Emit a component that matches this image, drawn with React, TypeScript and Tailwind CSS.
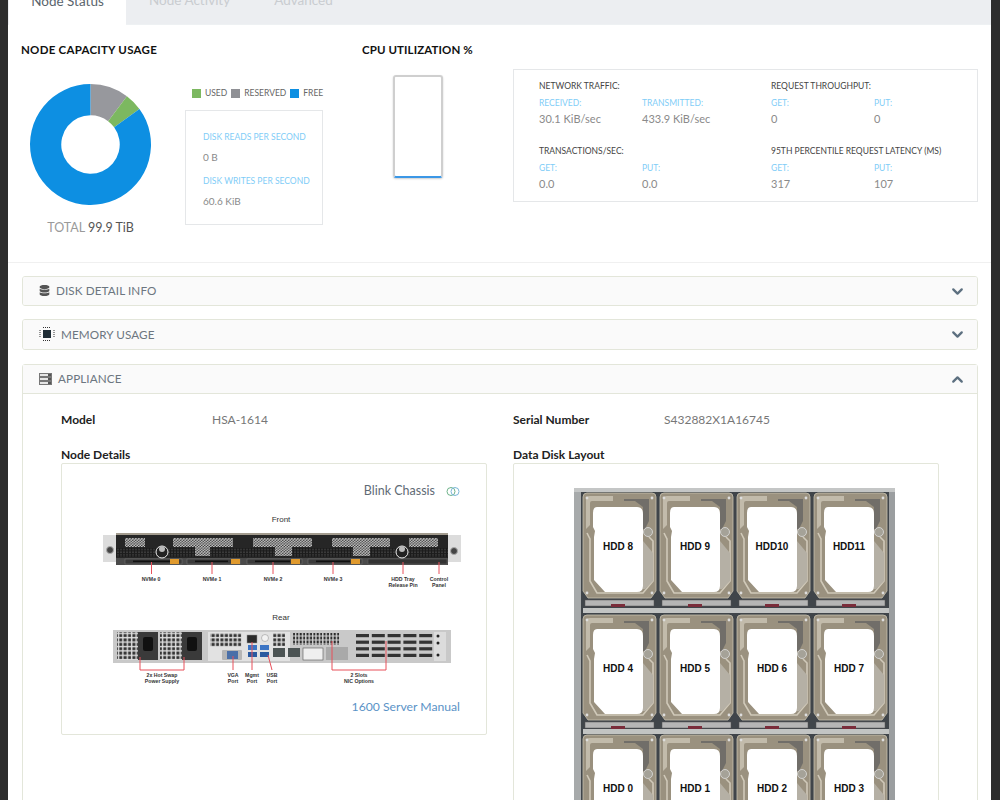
import React from "react";
import { ChevronDown, ChevronUp } from "lucide-react";
import { FaDatabase } from "react-icons/fa";

const FONT = "font-['Lato','Open_Sans',sans-serif]";

function Stat({ label, value }: { label: string; value: string }) {
  return (
    <div>
      <div className="text-[8.5px] leading-[12px] text-[#7fcdf7]">{label}</div>
      <div className="mt-[2px] text-[11px] leading-[16px] text-[#8a8a8a]">{value}</div>
    </div>
  );
}

function DiskStat({ label, value }: { label: string; value: string }) {
  return (
    <div>
      <div className="text-[8.5px] leading-[12px] text-[#7fcdf7]">{label}</div>
      <div className="mt-[6px] text-[10px] leading-[16px] text-[#8a8a8a]">{value}</div>
    </div>
  );
}

function Donut() {
  const arc = (a0: number, a1: number) => {
    const p = (a: number, r: number) => {
      const t = (a * Math.PI) / 180;
      return `${60 + r * Math.sin(t)} ${60 - r * Math.cos(t)}`;
    };
    const large = a1 - a0 > 180 ? 1 : 0;
    return `M${p(a0, 60)} A60 60 0 ${large} 1 ${p(a1, 60)} L${p(a1, 29)} A29 29 0 ${large} 0 ${p(a0, 29)} Z`;
  };
  return (
    <svg width="121" height="121" viewBox="0 0 120 120">
      <path d={arc(0, 37)} fill="#97989d" />
      <path d={arc(37, 54)} fill="#7cb860" />
      <path d={arc(54, 359.99)} fill="#0d8fe2" />
    </svg>
  );
}

function Legend({ color, label }: { color: string; label: string }) {
  return (
    <div className="flex items-center gap-[4px]">
      <span className={`w-[9px] h-[9px] ${color}`} />
      <span className="text-[8.5px] leading-[10px] text-[#666]">{label}</span>
    </div>
  );
}

function ChipIcon() {
  return (
    <svg width="16" height="16" viewBox="0 0 16 16">
      <rect x="4" y="4" width="8" height="8" fill="#1f2d36" />
      <g stroke="#333" strokeWidth="1" strokeDasharray="1 1">
        <path d="M4 1.5h8M4 14.5h8M1 4v8M15 4v8" />
      </g>
    </svg>
  );
}

function ServerIcon() {
  return (
    <svg width="13" height="12" viewBox="0 0 13 12">
      {[0, 4, 8].map((y) => (
        <g key={y}>
          <rect x="0.5" y={y + 0.5} width="12" height="3" fill="#e6e6e6" stroke="#777" />
          <rect x="9" y={y + 1} width="3" height="2" fill="#555" />
        </g>
      ))}
    </svg>
  );
}

function Accordion({ icon, title, open }: { icon: React.ReactNode; title: string; open?: boolean }) {
  return (
    <div className={`flex items-center justify-between bg-[#fafafa] border-[#e3e6da] ${open ? "h-[29px] border-b" : "h-full"} pl-[16px] pr-[11px]`}>
      <div className="flex items-center gap-[6px]">
        {icon}
        <span className="text-[11.7px] text-[#6c7680] tracking-[0.1px]">{title}</span>
      </div>
      {open ? (
        <ChevronUp size={17} strokeWidth={3.2} className="text-[#5d7080]" />
      ) : (
        <ChevronDown size={17} strokeWidth={3.2} className="text-[#5d7080]" />
      )}
    </div>
  );
}

function Label({ x, y, children }: { x: number; y: number; children: string }) {
  return (
    <text x={x} y={y} textAnchor="middle" fontSize="5.2" fontWeight="700" fontFamily="Liberation Sans, sans-serif" fill="#333">
      {children}
    </text>
  );
}

function ServerDiagram() {
  const vents = [
    [125, 538, 20, 9],
    [173, 538, 60, 9],
    [195, 547, 15, 9],
    [253, 538, 59, 9],
    [275, 547, 17, 9],
    [332, 538, 58, 9],
    [353, 547, 17, 9],
    [409, 538, 29, 9],
  ];
  const trays = [
    [125, 57, 170],
    [187, 53, 231],
    [247, 55, 291],
    [308, 54, 351],
  ];
  const leaders = [151.5, 212, 273, 333, 403, 439];
  return (
    <svg width="380" height="186" viewBox="90 512 380 186" className="block" fontFamily="Liberation Sans, sans-serif">
      <defs>
        <pattern id="hex" width="3" height="2.6" patternUnits="userSpaceOnUse">
          <rect width="3" height="2.6" fill="#3a3a3a" />
          <circle cx="0.8" cy="0.7" r="0.9" fill="#c4c4c4" />
          <circle cx="2.3" cy="2" r="0.9" fill="#c4c4c4" />
        </pattern>
        <pattern id="dark" width="3" height="2.6" patternUnits="userSpaceOnUse">
          <rect width="3" height="2.6" fill="#1c1c1c" />
          <circle cx="1" cy="1" r="0.7" fill="#555" />
        </pattern>
        <pattern id="holes" width="4.4" height="4.4" patternUnits="userSpaceOnUse">
          <rect width="4.4" height="4.4" fill="#dedede" />
          <rect x="0.4" y="0.4" width="3" height="3" fill="#333" />
        </pattern>
        <pattern id="pci" width="3.4" height="4" patternUnits="userSpaceOnUse">
          <rect width="3.4" height="4" fill="#d4d4d4" />
          <rect x="0.5" y="0.5" width="2" height="3" fill="#2a2a2a" />
        </pattern>
      </defs>

      <text x="281" y="522" textAnchor="middle" fontSize="8" fill="#333">Front</text>
      <rect x="103" y="535" width="14" height="27" fill="#dcdcdc" />
      <rect x="447" y="535" width="14" height="27" fill="#dcdcdc" />
      <circle cx="110" cy="550" r="3.5" fill="#444" stroke="#aaa" />
      <circle cx="454" cy="551" r="3.5" fill="#444" stroke="#aaa" />
      <rect x="116" y="533" width="332" height="32" fill="#262626" />
      <rect x="116" y="533" width="332" height="2" fill="#a39c8f" />
      <rect x="116" y="548" width="332" height="9" fill="url(#dark)" />
      {vents.map(([x, y, w, h], i) => (
        <rect key={i} x={x} y={y} width={w} height={h} fill="url(#hex)" />
      ))}
      <rect x="116" y="558" width="332" height="7" fill="#4a4a4a" />
      {trays.map(([x, w, o]) => (
        <g key={x}>
          <rect x={x} y="559" width={w} height="5" fill="#3a3a3a" stroke="#777" strokeWidth="0.5" />
          <rect x={x + 8} y="560.5" width={w - 20} height="1.6" fill="#111" />
          <rect x={o} y="559" width="9" height="5" fill="#e09a2e" />
        </g>
      ))}
      <rect x="368" y="559" width="79" height="5" fill="#333" stroke="#666" strokeWidth="0.5" />
      <circle cx="162" cy="552" r="6" fill="#222" stroke="#eee" strokeWidth="1" />
      <circle cx="162" cy="549" r="3" fill="#bbb" />
      <circle cx="402" cy="552" r="6" fill="#222" stroke="#eee" strokeWidth="1" />
      <circle cx="402" cy="549" r="3" fill="#bbb" />
      {leaders.map((x) => (
        <line key={x} x1={x} x2={x} y1="562" y2="574" stroke="#e8505b" strokeWidth="1" />
      ))}
      <Label x={151} y={581}>NVMe 0</Label>
      <Label x={212} y={581}>NVMe 1</Label>
      <Label x={273} y={581}>NVMe 2</Label>
      <Label x={333} y={581}>NVMe 3</Label>
      <Label x={403} y={581}>HDD Tray</Label>
      <Label x={403} y={587}>Release Pin</Label>
      <Label x={439} y={581}>Control</Label>
      <Label x={439} y={587}>Panel</Label>

      <text x="281" y="620" textAnchor="middle" fontSize="8" fill="#333">Rear</text>
      <rect x="113" y="630" width="338" height="33" fill="#c9c9c9" />
      <rect x="117" y="632" width="41" height="28" fill="url(#holes)" />
      <rect x="160" y="632" width="42" height="28" fill="url(#holes)" />
      <rect x="138" y="632" width="20" height="28" fill="#3a3a3a" />
      <rect x="182" y="632" width="20" height="28" fill="#3a3a3a" />
      <rect x="143" y="637" width="10" height="14" rx="2" fill="#111" />
      <rect x="187" y="637" width="10" height="14" rx="2" fill="#111" />
      <rect x="208" y="632" width="82" height="29" fill="#e2e2e2" />
      <rect x="210" y="633" width="32" height="14" fill="url(#holes)" />
      <rect x="222" y="650" width="20" height="10" rx="1" fill="#b5b5b5" />
      <rect x="227" y="651" width="11" height="8" fill="#4a6fa8" />
      <rect x="247" y="635" width="10" height="8" fill="#2b2b2b" stroke="#999" strokeWidth="0.5" />
      <rect x="248" y="645" width="9" height="5" fill="#3b74c4" />
      <rect x="248" y="652" width="9" height="5" fill="#2a5aa0" />
      <rect x="260" y="645" width="9" height="5" fill="#3b74c4" />
      <rect x="260" y="652" width="9" height="5" fill="#2a5aa0" />
      <circle cx="265" cy="638" r="3.5" fill="#f2f2f2" stroke="#888" strokeWidth="0.5" />
      <rect x="273" y="633" width="12" height="13" fill="url(#holes)" />
      <rect x="273" y="648" width="12" height="9" fill="#4b5353" />
      <rect x="288" y="648" width="12" height="9" fill="#4b5353" />
      <rect x="293" y="633" width="47" height="12" fill="url(#pci)" />
      <rect x="303" y="648" width="20" height="12" fill="#efefef" stroke="#555" strokeWidth="0.6" />
      <rect x="326" y="647" width="22" height="13" fill="#a9a9a9" />
      {[0, 1, 2, 3].map((r) =>
        [0, 1, 2, 3, 4].map((c) => (
          <rect key={`${r}-${c}`} x={356 + c * 15.8} y={634 + r * 6.6} width="13" height="3.2" fill="#333" />
        )),
      )}
      <rect x="434" y="632" width="12" height="29" fill="#dcdcdc" />
      <circle cx="438" cy="636" r="1.5" fill="#222" />
      <circle cx="438" cy="643" r="1.5" fill="#222" />
      <circle cx="438" cy="655" r="1.5" fill="#222" />
      <g stroke="#e8505b" strokeWidth="1" fill="none">
        <path d="M140 657V670H184V657" />
        <path d="M332 641V670H386V641" />
        <path d="M233 656V670" />
        <path d="M252 642V670" />
        <path d="M268 655L272 670" />
      </g>
      <Label x={162} y={677}>2x Hot Swap</Label>
      <Label x={162} y={682.5}>Power Supply</Label>
      <Label x={233} y={677}>VGA</Label>
      <Label x={233} y={682.5}>Port</Label>
      <Label x={252} y={677}>Mgmt</Label>
      <Label x={252} y={682.5}>Port</Label>
      <Label x={272} y={677}>USB</Label>
      <Label x={272} y={682.5}>Port</Label>
      <Label x={359} y={677}>2 Slots</Label>
      <Label x={359} y={682.5}>NIC Options</Label>
    </svg>
  );
}

function Hdd({ x, y, label }: { x: number; y: number; label: string }) {
  return (
    <g transform={`translate(${x} ${y})`}>
      <path d="M4 0H69Q73 0 73 4V98L68 105H5L0 98V4Q0 0 4 0Z" fill="#9a917f" stroke="#c8c1b0" strokeWidth="0.8" />
      <path d="M3 7Q3 3 7 3H30V8H9Q7 8 7 10V32L3 36Z" fill="#c2bbab" />
      <path d="M41 6H66V28L62 36H60V14L52 8H41Z" fill="#5f5f5f" opacity="0.7" />
      <circle cx="65" cy="39" r="4.5" fill="#a5a298" stroke="#ddd" strokeWidth="0.8" />
      <path d="M4 40L7 46V88L14 100H60L70 88V48L66 44" fill="none" stroke="#d0c9b9" strokeWidth="1.6" />
      <path d="M60 48L70 60V88L62 96H60Z" fill="#b5b0a5" />
      <circle cx="4" cy="5" r="1.4" fill="#ddd" />
      <circle cx="69" cy="5" r="1.4" fill="#ddd" />
      <circle cx="4" cy="100" r="1.4" fill="#ddd" />
      <circle cx="69" cy="100" r="1.4" fill="#ddd" />
      <path d="M14 14H54Q60 14 60 21V93Q60 99 54 99H22L11 87V44L12 38L10 34V20Q10 14 14 14Z" fill="#fff" />
      <text x="35" y="56.5" textAnchor="middle" fontSize="10" fontWeight="700" fontFamily="Liberation Sans, sans-serif" fill="#111">
        {label}
      </text>
      <rect x="2" y="107" width="69" height="6" fill="#b5b5b5" stroke="#555" strokeWidth="0.5" />
      <rect x="28" y="111" width="14" height="3" fill="#7a2c3a" />
    </g>
  );
}

function DiskLayout() {
  const cols = [582, 659, 736, 813];
  const rows: [number, string[]][] = [
    [493, ["HDD 8", "HDD 9", "HDD10", "HDD11"]],
    [615, ["HDD 4", "HDD 5", "HDD 6", "HDD 7"]],
    [735, ["HDD 0", "HDD 1", "HDD  2", "HDD  3"]],
  ];
  return (
    <svg width="321" height="372" viewBox="573 488 321 372" className="block">
      <rect x="573" y="488" width="321" height="372" fill="#40454a" />
      <rect x="573" y="488" width="7" height="372" fill="#a7aaab" />
      <rect x="888" y="488" width="6" height="372" fill="#9b9ea0" />
      <rect x="573" y="488" width="321" height="4" fill="#c4c6c6" />
      <rect x="582" y="608" width="306" height="5" fill="#c2c4c3" />
      <rect x="582" y="729" width="306" height="5" fill="#c2c4c3" />
      {rows.map(([y, labels]) =>
        labels.map((l, i) => <Hdd key={l} x={cols[i]} y={y} label={l} />),
      )}
    </svg>
  );
}

export default function App() {
  return (
    <div className={`h-[800px] w-[1000px] overflow-hidden bg-[#2d2d2d] px-[8px] ${FONT}`}>
      <div className="bg-white h-full w-[983px]">
        <div className="flex h-[25px] bg-[#eceef1] border-b border-[#eef1f3] pl-px text-[13.5px] leading-4 text-[#c9ccd0]">
          <div className="w-[117px] h-[25px] bg-white flex justify-center items-end pb-[16px] text-[#5a646c]">Node Status</div>
          <div className="ml-[23px] flex items-end pb-[16px]">Node Activity</div>
          <div className="ml-[44px] flex items-end pb-[16px]">Advanced</div>
        </div>

        <div className="h-[238px] border-b border-[#f0f0f0] pl-[13px] pt-[18px] flex">
          <div className="w-[341px]">
            <h2 className="text-[11.5px] leading-[14px] font-bold text-[#111] tracking-[0.25px]">NODE CAPACITY USAGE</h2>
            <div className="mt-[27px] flex">
              <div className="w-[164px] pl-[9px]">
                <Donut />
                <div className="mt-[15px] w-[121px] text-center text-[12.5px] leading-[16px] text-[#9a9a9a]">
                  TOTAL <span className="text-[#555]">99.9 TiB</span>
                </div>
              </div>
              <div>
                <div className="flex gap-[4px] pl-[7px] pt-[4px]">
                  <Legend color="bg-[#7cb860]" label="USED" />
                  <Legend color="bg-[#8f9095]" label="RESERVED" />
                  <Legend color="bg-[#0d8fe2]" label="FREE" />
                </div>
                <div className="mt-[12px] w-[138px] h-[115px] border border-[#e5e7e9] pl-[17px] pt-[20px]">
                  <DiskStat label="DISK READS PER SECOND" value="0 B" />
                  <div className="mt-[10px]">
                    <DiskStat label="DISK WRITES PER SECOND" value="60.6 KiB" />
                  </div>
                </div>
              </div>
            </div>
          </div>

          <div className="w-[151px]">
            <h2 className="text-[11.5px] leading-[14px] font-bold text-[#111] tracking-[0.1px]">CPU UTILIZATION %</h2>
            <div className="ml-[31px] mt-[18px] w-[50px] h-[103px] rounded-[3px] border-2 border-[#cfcfcf] border-b-[#3b97e6] shadow-[0_1px_2px_rgba(0,0,0,0.2)]" />
          </div>

          <div className="w-[465px] h-[133px] mt-[26px] border border-[#e5e7e9] pl-[25px] pt-[10px] text-[#444] grid grid-cols-[232px_1fr] grid-rows-[65px_1fr]">
            {[
              ["NETWORK TRAFFIC:", "RECEIVED:", "30.1 KiB/sec", "TRANSMITTED:", "433.9 KiB/sec"],
              ["REQUEST THROUGHPUT:", "GET:", "0", "PUT:", "0"],
              ["TRANSACTIONS/SEC:", "GET:", "0.0", "PUT:", "0.0"],
              ["95TH PERCENTILE REQUEST LATENCY (MS)", "GET:", "317", "PUT:", "107"],
            ].map((g) => (
              <div key={g[0]}>
                <div className="text-[8.5px] leading-[12px] text-[#444]">{g[0]}</div>
                <div className="mt-[5px] grid grid-cols-[103px_1fr]">
                  <Stat label={g[1]} value={g[2]} />
                  <Stat label={g[3]} value={g[4]} />
                </div>
              </div>
            ))}
          </div>
        </div>

        <div className="pl-[14px] pr-[13px] pt-[13px]">
          <div className="h-[30px] border border-[#e3e6da] rounded-[3px] overflow-hidden">
            <Accordion title="DISK DETAIL INFO" icon={<FaDatabase size={11} className="text-[#555]" />} />
          </div>
          <div className="mt-[13px] h-[31px] border border-[#e3e6da] rounded-[3px] overflow-hidden">
            <Accordion title="MEMORY USAGE" icon={<ChipIcon />} />
          </div>
          <div className="mt-[14px] h-[600px] border border-[#e3e6da] rounded-[3px]">
            <Accordion open title="APPLIANCE" icon={<ServerIcon />} />
            <div className="pl-[38px] pt-[19px] grid grid-cols-[452px_426px]">
              <div className="flex h-[14px] items-center text-[12px]">
                <span className="w-[151px] font-bold text-[#222]">Model</span>
                <span className="text-[#777]">HSA-1614</span>
              </div>
              <div className="flex h-[14px] items-center text-[12px]">
                <span className="w-[151px] font-bold text-[#222]">Serial Number</span>
                <span className="text-[#777]">S432882X1A16745</span>
              </div>
              <div className="mt-[21px] h-[15px] text-[12px] leading-[14px] font-bold text-[#222]">Node Details</div>
              <div className="mt-[21px] h-[15px] text-[12px] leading-[14px] font-bold text-[#222]">Data Disk Layout</div>
              <div className="w-[426px] h-[272px] border border-[#e3e6da] rounded-[2px] pt-[18px]">
                <div className="flex justify-end items-center gap-[11px] pr-[26px] h-[18px]">
                  <span className="text-[12.5px] text-[#5f6b75]">Blink Chassis</span>
                  <svg width="14" height="9" viewBox="0 0 14 9" fill="none">
                    <circle cx="5" cy="4.5" r="4" stroke="#6fb38a" />
                    <circle cx="9" cy="4.5" r="4" stroke="#7ab6d8" />
                  </svg>
                </div>
                <div className="pl-[28px] mt-[12px]">
                  <ServerDiagram />
                </div>
                <div className="text-right pr-[26px] text-[12.2px] text-[#5b93c7]">1600 Server Manual</div>
              </div>
              <div className="w-[426px] h-[500px] border border-[#e3e6da] rounded-[2px] pt-[24px] pl-[60px]">
                <DiskLayout />
              </div>
            </div>
          </div>
        </div>
      </div>
    </div>
  );
}
